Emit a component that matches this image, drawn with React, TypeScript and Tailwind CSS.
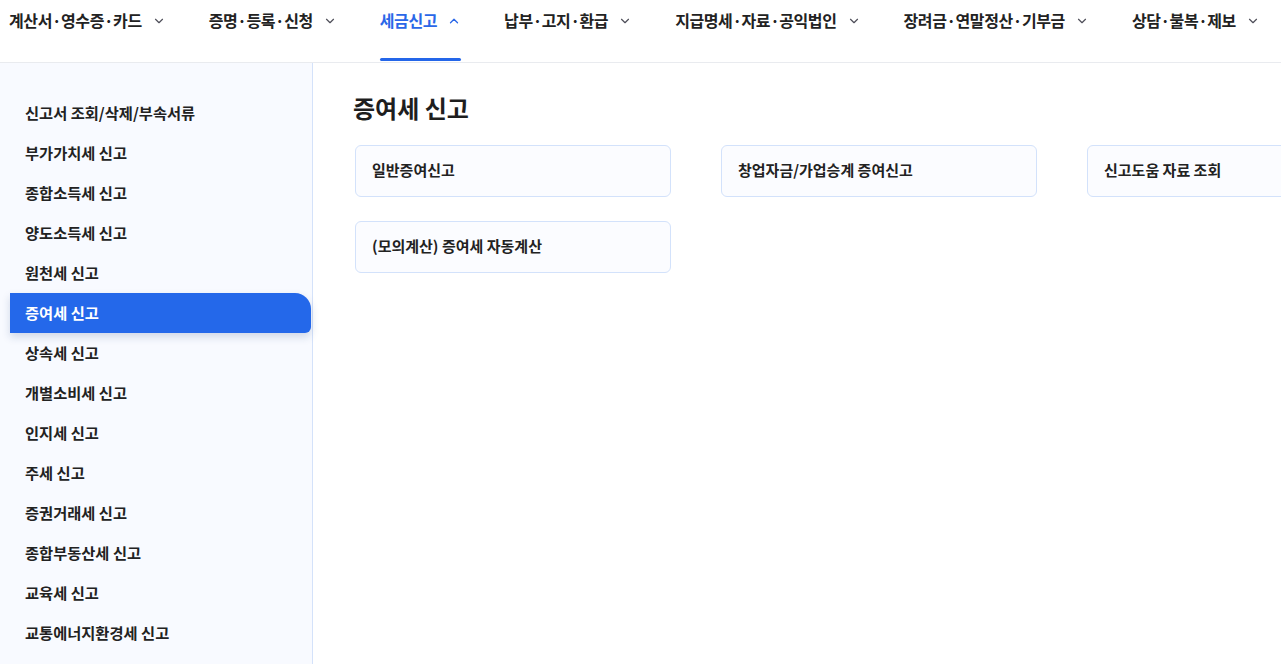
import React from "react";
import { ChevronDown, ChevronUp } from "lucide-react";

const navItems = [
  { label: "계산서·영수증·카드" },
  { label: "증명·등록·신청" },
  { label: "세금신고", active: true },
  { label: "납부·고지·환급" },
  { label: "지급명세·자료·공익법인" },
  { label: "장려금·연말정산·기부금" },
  { label: "상담·불복·제보" },
];

const sideItems = [
  "신고서 조회/삭제/부속서류",
  "부가가치세 신고",
  "종합소득세 신고",
  "양도소득세 신고",
  "원천세 신고",
  "증여세 신고",
  "상속세 신고",
  "개별소비세 신고",
  "인지세 신고",
  "주세 신고",
  "증권거래세 신고",
  "종합부동산세 신고",
  "교육세 신고",
  "교통에너지환경세 신고",
];

const cards = [
  "일반증여신고",
  "창업자금/가업승계 증여신고",
  "신고도움 자료 조회",
  "(모의계산) 증여세 자동계산",
];

export default function App() {
  return (
    <div
      className="w-[1281px] h-[664px] overflow-hidden bg-white text-[#222]"
      style={{ fontFamily: '"Noto Sans CJK KR", "Noto Sans", sans-serif' }}
    >
      <nav className="h-[63px] flex gap-[43px] pl-[9px] border-b border-[#e9ebef]">
        {navItems.map((n) => (
          <div
            key={n.label}
            className={`relative flex items-start pt-[8px] h-full shrink-0 ${
              n.active ? "text-[#2a67e8]" : "text-[#222]"
            }`}
          >
            <span className="text-[16px] font-semibold leading-[24px] tracking-[-0.4px] whitespace-nowrap">
              {n.label}
            </span>
            <span className="ml-[10px] mt-[6px]">
              {n.active ? (
                <ChevronUp size={14} strokeWidth={2.2} className="text-[#2a67e8]" />
              ) : (
                <ChevronDown size={14} strokeWidth={2} className="text-[#4f4f5a]" />
              )}
            </span>
            {n.active && (
              <span className="absolute left-0 right-0 bottom-[1px] h-[3px] rounded-full bg-[#2466e9]" />
            )}
          </div>
        ))}
      </nav>
      <div className="flex h-[601px]">
        <aside className="w-[313px] shrink-0 bg-[#f8faff] border-r border-[#d4e2fa] pt-[30px] pl-[10px]">
          {sideItems.map((s) => {
            const active = s === "증여세 신고";
            return (
              <div
                key={s}
                className={`h-[40px] flex items-center pl-[15px] pb-[2px] text-[15.3px] font-semibold ${
                  active
                    ? "bg-[#2468ea] text-white rounded-tr-[16px] rounded-br-[6px] shadow-[0_4px_8px_rgba(30,60,120,0.18)] mr-[1px]"
                    : "text-[#222]"
                }`}
              >
                {s}
              </div>
            );
          })}
        </aside>
        <main className="flex-1 min-w-0 pl-[42px] pt-[31px] overflow-hidden">
          <h1 className="text-[24px] font-bold leading-[28px] text-[#1e1e1e] -ml-[2px]">
            증여세 신고
          </h1>
          <div className="mt-[23px] grid grid-cols-[316px_316px_316px] gap-x-[50px] gap-y-[24px] w-max">
            {cards.map((c) => (
              <div
                key={c}
                className="h-[52px] flex items-center pl-[16px] pb-[1px] border border-[#d3e2fb] rounded-[6px] bg-[#fbfcff] text-[15px] font-semibold text-[#222]"
              >
                {c}
              </div>
            ))}
          </div>
        </main>
      </div>
    </div>
  );
}
